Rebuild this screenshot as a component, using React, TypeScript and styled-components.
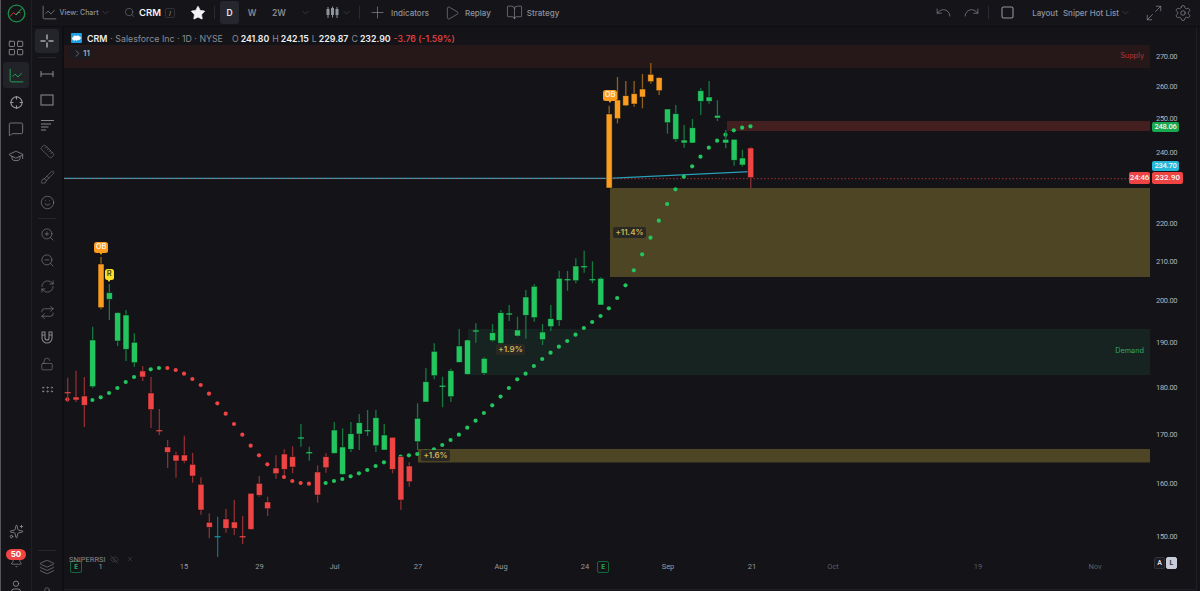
import React from 'react';
import styled, { createGlobalStyle } from 'styled-components';
import {
  LayoutGrid, ChartLine, MessageSquare, GraduationCap, Sparkles, Bell, User,
  Ruler, Brush, Smile, ZoomIn, ZoomOut, RefreshCw, Repeat, LockOpen,
  GripHorizontal, Layers, Play, BookOpen, Undo, Redo, Maximize2, Settings, Search,
  ChevronDown, ChevronRight, X, EyeOff, Plus, Star,
} from 'lucide-react';

const GREEN = '#22c55e';
const RED = '#ef4444';
const ORANGE = '#f99c1f';
const TEAL = '#1596ad';

const wickColors: Record<string, string> = { g: '#157a40', r: '#8f2f32', o: '#93601c', t: '#156b7c' };
const bodyColors: Record<string, string> = { g: GREEN, r: RED, o: ORANGE, t: TEAL };

// color, wick top, body top, body bottom, wick bottom (page px). a doji has top === bottom
const candles: [string, number, number, number, number][] = [
  ['r', 377.7, 392.7, 392.7, 402], ['r', 370.7, 397, 400, 402], ['r', 377, 396, 405.3, 427],
  ['g', 326.7, 340, 386.7, 388], ['o', 257, 264, 307.7, 309.3], ['g', 284, 292.7, 299.3, 320],
  ['g', 312, 312.7, 341, 346], ['g', 310, 315, 349.3, 361], ['g', 333.3, 342.3, 362.7, 366.7],
  ['r', 366, 371, 377, 381], ['r', 377, 393, 409.5, 428], ['r', 409, 430.7, 430.7, 435],
  ['r', 440, 447, 452.3, 468], ['r', 451.7, 455, 461, 477.7], ['r', 435.7, 455, 461, 463.3],
  ['r', 453, 464.3, 476, 482.7], ['r', 477.3, 484.3, 510, 514.7], ['r', 513.3, 522.3, 527.3, 538.3],
  ['t', 516.7, 536.7, 536.7, 557.3], ['r', 509, 519, 528.3, 532.7], ['r', 500, 522, 528.3, 535],
  ['r', 516, 536.7, 536.7, 544], ['r', 493, 493.3, 529.3, 530], ['r', 476, 483.3, 495.3, 496.7],
  ['r', 496.7, 502, 508.7, 516], ['r', 455.3, 468, 473.7, 478.7], ['r', 449.3, 454, 469.3, 474.7],
  ['r', 446.3, 456.7, 467, 473.3], ['g', 424, 438, 438, 446.7], ['g', 446.7, 452.7, 452.7, 460.7],
  ['r', 465.3, 472, 495, 502.7], ['r', 453.3, 456.7, 467.7, 472.7], ['g', 422, 430, 453.3, 454],
  ['g', 428.3, 447, 474.3, 475], ['g', 422, 433.7, 449.3, 452], ['g', 414, 422.7, 434, 450],
  ['g', 410, 430.7, 430.7, 436], ['g', 410, 417.7, 445.7, 452], ['g', 424, 435, 450, 450],
  ['r', 437, 437.3, 469.3, 473.3], ['r', 456, 456.7, 500, 510], ['r', 462.3, 466, 481.7, 486.7],
  ['g', 403.3, 418.3, 441.7, 450], ['g', 368, 381.7, 402, 402], ['g', 343.3, 351.3, 375.7, 379.3],
  ['g', 376.7, 386.3, 386.3, 407.3], ['g', 368.7, 370.7, 396.7, 402], ['g', 329, 346, 362.3, 362.7],
  ['g', 339.3, 340, 374.3, 375], ['g', 323.3, 331, 331, 342.7], ['g', 357.3, 358.3, 373.3, 375],
  ['g', 324, 332.7, 340.7, 341.7], ['g', 310, 312.7, 343.3, 344], ['g', 305, 314, 314, 321],
  ['g', 316.7, 330, 336, 336.7], ['g', 290, 297, 315.3, 338.7], ['g', 284.3, 286.3, 317.7, 321.7],
  ['g', 324, 332, 339.7, 345], ['g', 305, 318.7, 326.7, 331], ['g', 270.7, 278.3, 320.3, 326],
  ['g', 271, 279.7, 279.7, 290.7], ['g', 258.3, 266, 280.7, 283.3], ['g', 250.7, 266.7, 266.7, 272.7],
  ['g', 261.3, 279.7, 279.7, 283.3], ['g', 277.3, 278.3, 305, 305], ['o', 105.7, 114, 188, 188],
  ['o', 77, 100, 118.7, 123.3], ['o', 81, 95.7, 105.7, 106.3], ['o', 81, 93.7, 104, 106.7],
  ['o', 74, 89, 97, 108.3], ['o', 63, 74.3, 81.7, 83.7], ['o', 77, 77.7, 90.7, 95],
  ['g', 109, 109, 122.7, 133.7], ['g', 105, 113.7, 139.3, 141.7], ['g', 125, 140, 143, 147.7],
  ['g', 119, 127.7, 143, 143.3], ['g', 88.3, 90.7, 101.3, 115], ['g', 81, 97, 101.3, 103.7],
  ['g', 100.3, 115.3, 118, 121], ['g', 130, 139.3, 143, 148.3], ['g', 139, 139.3, 160.3, 165.7],
  ['g', 149.7, 158, 165, 166.7], ['r', 146.7, 148, 177.7, 188],
];

const dots = [
  399.3, 398.5, 400, 400, 397.3, 393, 388, 382, 377, 372.5, 369.3, 368, 368, 370, 373.7, 379, 385, 393.7,
  403.3, 413.7, 424, 434.7, 445.7, 455.3, 464.3, 471, 477, 481, 483, 483.7, 484, 483, 481, 479, 476.3,
  473.3, 470, 466, 462.3, 459, 456.7, 455.3, 454, 451.7, 449.3, 445, 440, 434.7, 427.7, 420.7, 413, 405.3,
  396.6, 388, 379.3, 373.7, 366, 359, 352.7, 346.7, 341, 334.7, 328, 322, 316, 308.3, 298, 285.3, 270.3,
  254.3, 237.7, 220.7, 204, 189.3, 176.7, 166.3, 156.7, 147.7, 140.7, 134.7, 130.3, 127.7, 126.3,
];

const dotColor = (i: number) => (i < 3 || (i >= 12 && i <= 30) ? RED : GREEN);
const barX = (i: number) => 67.7 + i * 8.33;

const priceLabels = [
  { y: 56.5, t: '270.00' }, { y: 87, t: '260.00' }, { y: 119, t: '250.00' }, { y: 153, t: '240.00' },
  { y: 224, t: '220.00' }, { y: 262, t: '210.00' }, { y: 301, t: '200.00' }, { y: 343, t: '190.00' },
  { y: 388, t: '180.00' }, { y: 435, t: '170.00' }, { y: 484, t: '160.00' }, { y: 537, t: '150.00' },
];

const timeLabels = [
  { x: 100.5, t: '1' }, { x: 184, t: '15' }, { x: 259.5, t: '29' }, { x: 334.5, t: 'Jul' }, { x: 418, t: '27' },
  { x: 501, t: 'Aug' }, { x: 585, t: '24' }, { x: 668, t: 'Sep' }, { x: 752, t: '21' },
  { x: 833, t: 'Oct', dim: true }, { x: 978, t: '19', dim: true }, { x: 1095, t: 'Nov', dim: true },
];

const GlobalStyle = createGlobalStyle`
  html, body { margin: 0; padding: 0; background: #131318; }
  body { font-family: Inter, "Noto Sans", sans-serif; overflow: hidden; }
  #root { height: 591px; }
  svg { flex-shrink: 0; }
`;

const Shell = styled.div`
  display: flex;
  width: 1200px;
  height: 591px;
  overflow: hidden;
  background: #131318;
  border-left: 1px solid #55555a;
  box-sizing: border-box;
`;

const Rail = styled.aside`
  width: 30px;
  flex-shrink: 0;
  display: flex;
  flex-direction: column;
  align-items: center;
  background: #141419;
  border-right: 1px solid #1f1f25;
  color: #96969c;
`;

const LogoSlot = styled.div`
  height: 26px;
  margin-bottom: 9px;
  display: flex;
  align-items: center;
  flex-shrink: 0;
`;

const RailButton = styled.div<{ $active?: boolean }>`
  width: 26px;
  height: 26px;
  margin-bottom: 1px;
  flex-shrink: 0;
  display: flex;
  align-items: center;
  justify-content: center;
  border-radius: 3px;
  background: ${(p) => (p.$active ? '#212329' : 'transparent')};
  color: ${(p) => (p.$active ? GREEN : 'inherit')};
`;

const RailBottom = styled.div`
  margin-top: 348px;
  display: flex;
  flex-direction: column;
  align-items: center;
`;

const AlertWrap = styled.div`
  height: 25px;
  margin-top: 4px;
  display: flex;
  flex-direction: column;
  align-items: center;
  flex-shrink: 0;
  svg {
    margin-top: -5px;
  }
`;

const AlertBadge = styled.div`
  position: relative;
  z-index: 1;
  width: 20px;
  height: 11px;
  border-radius: 6px;
  background: ${RED};
  color: #fff;
  font-size: 8px;
  font-weight: 700;
  line-height: 11px;
  text-align: center;
`;

const Main = styled.div`
  flex: 1;
  min-width: 0;
  display: flex;
  flex-direction: column;
`;

const TopBar = styled.header`
  height: 27px;
  flex-shrink: 0;
  display: flex;
  align-items: center;
  background: #141419;
  border-bottom: 1px solid #0e0e12;
  color: #8f939c;
  font-size: 8px;
  font-weight: 500;
  padding-right: 8.5px;
  padding-bottom: 1px;
  box-sizing: border-box;
`;

const TopItem = styled.div<{ $ml?: number; $gap?: number }>`
  display: flex;
  align-items: center;
  flex-shrink: 0;
  margin-left: ${(p) => p.$ml ?? 0}px;
  gap: ${(p) => p.$gap ?? 0}px;
  white-space: nowrap;
`;

const ViewLabel = styled.span`
  font-size: 7px;
`;

const Chevron = styled(TopItem)`
  color: #5f6168;
`;

const TopDivider = styled.div<{ $ml: number }>`
  width: 1px;
  height: 13px;
  flex-shrink: 0;
  margin-left: ${(p) => p.$ml}px;
  background: #2a2a30;
`;

const Symbol = styled.span`
  color: #f2f2f4;
  font-size: 9.5px;
  font-weight: 600;
`;

const SlashChip = styled.span`
  width: 8px;
  height: 8px;
  border: 1px solid #303036;
  border-radius: 2px;
  font-size: 6px;
  line-height: 8px;
  text-align: center;
  color: #9a9aa0;
`;

const Interval = styled.div<{ $ml: number; $w: number; $active?: boolean }>`
  margin-left: ${(p) => p.$ml}px;
  width: ${(p) => p.$w}px;
  height: 23px;
  flex-shrink: 0;
  display: flex;
  align-items: center;
  justify-content: center;
  border-radius: 3px;
  font-size: 8.5px;
  font-weight: 600;
  background: ${(p) => (p.$active ? '#26262e' : 'transparent')};
  color: ${(p) => (p.$active ? '#e8e8ec' : '#85888f')};
`;

const RightGroup = styled.div`
  margin-left: auto;
  display: flex;
  align-items: center;
`;

const LayoutName = styled.span`
  margin-left: 5px;
  font-size: 8px;
  color: #8d95a8;
`;

const LayoutLabel = styled.span`
  font-size: 8px;
  color: #8d95a8;
`;

const Body = styled.div`
  flex: 1;
  min-height: 0;
  display: flex;
`;

const DrawBar = styled.nav`
  width: 30px;
  flex-shrink: 0;
  display: flex;
  flex-direction: column;
  align-items: center;
  padding-top: 2px;
  background: #141419;
  border-right: 2px solid #0f0f13;
  color: #85858b;
`;

const ActiveTool = styled.div`
  width: 24px;
  height: 24px;
  flex-shrink: 0;
  border-radius: 3px;
  background: #24242b;
  color: #e6e6ea;
  display: flex;
  align-items: center;
  justify-content: center;
`;

const ToolDivider = styled.div<{ $mt: number }>`
  width: 18px;
  height: 1px;
  flex-shrink: 0;
  margin: ${(p) => p.$mt}px 0 3px;
  background: #26262c;
`;

const Tool = styled.div`
  height: 25.8px;
  flex-shrink: 0;
  display: flex;
  align-items: center;
  justify-content: center;
`;

const ChartColumn = styled.div`
  flex: 1;
  min-width: 0;
  display: flex;
  flex-direction: column;
`;

const ChartRow = styled.div`
  height: 530px;
  flex-shrink: 0;
  display: flex;
`;

const Pane = styled.main`
  position: relative;
  width: 1086px;
  flex-shrink: 0;
`;

const ChartSvg = styled.svg`
  display: block;
`;

const Legend = styled.div`
  position: absolute;
  left: 7px;
  top: 5px;
  display: flex;
  align-items: center;
  height: 12px;
  font-size: 8.8px;
  color: #8c8c92;
  white-space: nowrap;
`;

const LegendSymbol = styled.span`
  margin: 0 3px 0 5px;
  color: #eeeef0;
  font-weight: 600;
`;

const Ohlc = styled.span<{ $ml?: number }>`
  margin-left: ${(p) => p.$ml ?? 3}px;
`;

const OhlcValue = styled.b`
  color: #eeeef0;
  font-weight: 600;
  margin-left: 2px;
`;

const Change = styled.span`
  margin-left: 3px;
  color: ${RED};
  font-weight: 500;
`;

const CollapseChip = styled.div`
  position: absolute;
  left: 6px;
  top: 20px;
  width: 22px;
  height: 12px;
  display: flex;
  align-items: center;
  justify-content: center;
  border-radius: 2px;
  background: #1a1a1f;
  color: #a8a8ae;
  font-size: 8px;
  font-weight: 600;
`;

const ZoneLabel = styled.span<{ $color: string; $right: number; $top: number }>`
  position: absolute;
  right: ${(p) => p.$right}px;
  top: ${(p) => p.$top}px;
  font-size: 7.3px;
  line-height: 10px;
  color: ${(p) => p.$color};
`;

const PercentTag = styled.span<{ $left: number; $top: number; $w: number }>`
  position: absolute;
  left: ${(p) => p.$left}px;
  top: ${(p) => p.$top}px;
  width: ${(p) => p.$w}px;
  height: 11px;
  border-radius: 2px;
  background: #2a2822;
  color: #cdb656;
  font-size: 8px;
  font-weight: 600;
  line-height: 11px;
  text-align: center;
`;

const Marker = styled.span<{ $left: number; $top: number; $w: number; $bg: string; $fg: string }>`
  position: absolute;
  left: ${(p) => p.$left}px;
  top: ${(p) => p.$top}px;
  width: ${(p) => p.$w}px;
  height: 10.5px;
  border-radius: 2.5px;
  background: ${(p) => p.$bg};
  color: ${(p) => p.$fg};
  font-size: 7.5px;
  font-weight: 600;
  line-height: 10.5px;
  text-align: center;
  &::after {
    content: '';
    position: absolute;
    left: 50%;
    bottom: -2.5px;
    margin-left: -2.5px;
    border-left: 2.5px solid transparent;
    border-right: 2.5px solid transparent;
    border-top: 3px solid ${(p) => p.$bg};
  }
`;

const PaneName = styled.div`
  position: absolute;
  left: 5px;
  top: 528px;
  z-index: 1;
  display: flex;
  align-items: center;
  height: 8px;
  font-family: Roboto, sans-serif;
  font-size: 7.5px;
  color: #8a8a90;
`;

const PaneAction = styled.span<{ $ml: number }>`
  margin-left: ${(p) => p.$ml}px;
  display: flex;
  color: #66666c;
`;

const PriceAxis = styled.div`
  position: relative;
  width: 46px;
  flex-shrink: 0;
  border-right: 1px solid #1e1e24;
  font-family: Roboto, sans-serif;
`;

const PriceLabel = styled.span`
  position: absolute;
  left: 6px;
  font-size: 7.5px;
  letter-spacing: -0.3px;
  line-height: 10px;
  transform: translateY(-50%);
  color: #b4b4b9;
`;

const PriceTag = styled.span<{ $bg: string; $left: number; $top: number; $w: number; $h: number; $fg?: string }>`
  position: absolute;
  left: ${(p) => p.$left}px;
  top: ${(p) => p.$top}px;
  width: ${(p) => p.$w}px;
  height: ${(p) => p.$h}px;
  border-radius: 2px;
  background: ${(p) => p.$bg};
  color: ${(p) => p.$fg ?? '#f4f4f6'};
  font-size: 7.5px;
  letter-spacing: -0.2px;
  font-weight: 500;
  line-height: ${(p) => p.$h}px;
  text-align: center;
`;

const LivePriceTag = styled(PriceTag)`
  font-size: 8px;
  letter-spacing: 0;
`;

const CountdownTag = styled(PriceTag)`
  z-index: 2;
  font-size: 8px;
`;

const TimeAxis = styled.div`
  position: relative;
  height: 33px;
  flex-shrink: 0;
  border-bottom: 1px solid #1e1e24;
  border-right: 1px solid #1e1e24;
  box-sizing: border-box;
  width: 1133px;
  font-family: Roboto, sans-serif;
`;

const TimeLabel = styled.span<{ $dim?: boolean }>`
  position: absolute;
  top: 6px;
  font-size: 7.5px;
  line-height: 7px;
  transform: translateX(-50%);
  color: ${(p) => (p.$dim ? '#5e5e64' : '#9a9aa0')};
`;

const EventBadge = styled.span<{ $left: number }>`
  position: absolute;
  left: ${(p) => p.$left}px;
  top: 4px;
  width: 10px;
  height: 10px;
  border: 1px solid #17653a;
  border-radius: 2px;
  color: #26a85c;
  font-size: 6.5px;
  font-weight: 700;
  line-height: 10px;
  text-align: center;
`;

const ScaleButton = styled.span<{ $left: number; $on?: boolean }>`
  position: absolute;
  left: ${(p) => p.$left}px;
  top: 0;
  width: 9px;
  height: 10px;
  border-radius: 2px;
  border: 1px solid ${(p) => (p.$on ? '#c8ccd8' : '#33333a')};
  background: ${(p) => (p.$on ? '#c8ccd8' : '#1c1c22')};
  color: ${(p) => (p.$on ? '#33333a' : '#d8d8de')};
  font-size: 7px;
  font-weight: 700;
  line-height: 10px;
  text-align: center;
`;

const LogoIcon = () => (
  <svg width="19" height="19" viewBox="0 0 19 19" fill="none">
    <circle cx="9.5" cy="9.5" r="8.3" stroke="#1a8f49" strokeWidth="1.3" />
    <path d="M3 12.5 6.5 8.5 9 11l2.5-3 2 1" stroke="#c7383c" strokeWidth="1" />
    <path d="M9 11l3-3.5 3-3" stroke="#2cc267" strokeWidth="1" />
  </svg>
);

const TargetIcon = () => (
  <svg width="15" height="15" viewBox="0 0 15 15" fill="none" stroke="currentColor" strokeWidth="1.1">
    <circle cx="7.5" cy="7.5" r="5.6" />
    <path d="M7.5 1v3.4M7.5 10.6V14M1 7.5h3.4M10.6 7.5H14" />
  </svg>
);

const CrossIcon = () => (
  <svg width="14" height="14" viewBox="0 0 14 14" fill="none" stroke="currentColor" strokeWidth="1">
    <path d="M7 0.5v5M7 8.500v5M0.500 7h5M8.500 7h5" />
  </svg>
);

const MeasureIcon = () => (
  <svg width="14" height="10" viewBox="0 0 14 10" fill="none" stroke="currentColor" strokeWidth="1.1">
    <path d="M1 2v6M13 2v6M1 5h12" />
  </svg>
);

const LinesIcon = () => (
  <svg width="13" height="12" viewBox="0 0 13 12" fill="none" stroke="currentColor" strokeWidth="1">
    <path d="M0 1.500h13M0 5h10M0 8h7.500M0 11h5" />
  </svg>
);

const MagnetIcon = () => (
  <svg width="12" height="13" viewBox="0 0 12 13" fill="none" stroke="currentColor" strokeWidth="1.1">
    <path d="M1 1h3v6a2 2 0 0 0 4 0V1h3v6a5 5 0 0 1-10 0zM1 4h3M8 4h3" />
  </svg>
);

const CandlesIcon = () => (
  <svg width="13" height="13" viewBox="0 0 13 13" fill="#8f939c" stroke="#8f939c" strokeWidth="1">
    <path d="M2 1v11M6.500 0.500v11M11 1v11" />
    <rect x="1" y="3.500" width="2" height="5" />
    <rect x="5.500" y="2.500" width="2" height="6" />
    <rect x="10" y="3.500" width="2" height="5" />
  </svg>
);

const CloudIcon = () => (
  <svg width="11" height="10" viewBox="0 0 11 10">
    <rect width="11" height="10" rx="1" fill="#1f9fe2" />
    <path d="M2 6.800a1.500 1.500 0 0 1 .3-2.900 1.900 1.900 0 0 1 3.200-.9 1.700 1.700 0 0 1 2.800.5 1.500 1.500 0 0 1 .6 2.900 1.400 1.400 0 0 1-2 .4 1.600 1.600 0 0 1-2.500.2 1.500 1.500 0 0 1-2.400-.2z" fill="#fff" />
  </svg>
);

const Chart = () => (
  <ChartSvg width="1086" height="530" viewBox="64 27 1086 530">
    <rect x="64" y="45" width="1086" height="23" fill="#261718" />
    <rect x="727" y="121" width="423" height="10" fill="#43201f" />
    <rect x="610" y="188" width="540" height="89" fill="#4d4524" />
    <rect x="468" y="329" width="682" height="46" fill="#172321" />
    <rect x="418" y="449" width="732" height="13.500" fill="#4d4524" />
    <path d="M64 178.300H608L750 171.700" fill="none" stroke="#2a9fb8" strokeWidth="1.300" />
    <path d="M64 178.700H1130" fill="none" stroke={RED} strokeOpacity="0.8" strokeWidth="0.800" strokeDasharray="1.500 2" />
    {dots.map((y, i) => (
      <circle key={i} cx={barX(i) - 0.3} cy={y} r="2.100" fill={dotColor(i)} />
    ))}
    {candles.map(([c, wt, bt, bb, wb], i) => {
      const x = barX(i);
      const doji = bt === bb;
      return (
        <g key={i}>
          <path d={`M${x} ${wt}V${wb}`} stroke={wickColors[c]} strokeWidth="1.300" />
          {doji ? (
            <rect x={x - 3} y={bt - 0.7} width="6" height="1.400" fill={bodyColors[c]} opacity="0.85" />
          ) : (
            <rect x={x - 3} y={bt} width="6" height={bb - bt} fill={bodyColors[c]} stroke="#0e0e12" strokeOpacity="0.7" strokeWidth="0.700" />
          )}
        </g>
      );
    })}
  </ChartSvg>
);

export default function App() {
  return (
    <>
      <GlobalStyle />
      <Shell>
        <Rail>
          <LogoSlot><LogoIcon /></LogoSlot>
          <RailButton><LayoutGrid size={18} strokeWidth={1.1} /></RailButton>
          <RailButton $active><ChartLine size={17} strokeWidth={1.1} /></RailButton>
          <RailButton><TargetIcon /></RailButton>
          <RailButton><MessageSquare size={16} strokeWidth={1.1} /></RailButton>
          <RailButton><GraduationCap size={16} strokeWidth={1.1} /></RailButton>
          <RailBottom>
            <RailButton><Sparkles size={15} strokeWidth={1.2} /></RailButton>
            <AlertWrap>
              <AlertBadge>50</AlertBadge>
              <Bell size={13} strokeWidth={1.2} />
            </AlertWrap>
            <RailButton><User size={16} strokeWidth={1.2} /></RailButton>
          </RailBottom>
        </Rail>
        <Main>
          <TopBar>
            <TopItem $ml={9} $gap={1.5}>
              <ChartLine size={17} strokeWidth={1} />
              <ViewLabel>View: Chart</ViewLabel>
              <ChevronDown size={11} strokeWidth={1} color="#5f6168" />
            </TopItem>
            <TopItem $ml={13} $gap={4}>
              <Search size={11} strokeWidth={1} />
              <Symbol>CRM</Symbol>
              <SlashChip>/</SlashChip>
            </TopItem>
            <TopItem $ml={15}>
              <Star size={16} fill="#f4f4f6" color="#f4f4f6" strokeWidth={1} />
            </TopItem>
            <TopDivider $ml={8} />
            <Interval $ml={5} $w={19} $active>D</Interval>
            <Interval $ml={3.500} $w={19}>W</Interval>
            <Interval $ml={7} $w={21}>2W</Interval>
            <Chevron $ml={10}><ChevronDown size={11} strokeWidth={1} /></Chevron>
            <TopItem $ml={15.500}><CandlesIcon /></TopItem>
            <Chevron $ml={1.500}><ChevronDown size={11} strokeWidth={1} /></Chevron>
            <TopDivider $ml={7.500} />
            <TopItem $ml={8} $gap={4}>
              <Plus size={19} strokeWidth={0.8} />
              <span>Indicators</span>
            </TopItem>
            <TopItem $ml={15} $gap={5}>
              <Play size={16} strokeWidth={0.9} />
              <span>Replay</span>
            </TopItem>
            <TopItem $ml={15.600} $gap={3.400}>
              <BookOpen size={17} strokeWidth={0.9} />
              <span>Strategy</span>
            </TopItem>
            <RightGroup>
              <Undo size={17} strokeWidth={0.9} />
              <TopItem $ml={11}><Redo size={17} strokeWidth={0.9} /></TopItem>
              <TopDivider $ml={8} />
              <TopItem $ml={12}>
                <svg width="13" height="13" viewBox="0 0 13 13" fill="none" stroke="currentColor" strokeWidth="1.100">
                  <rect x="1" y="1" width="11" height="11" rx="1.500" />
                </svg>
              </TopItem>
              <TopItem $ml={18}>
                <LayoutLabel>Layout</LayoutLabel>
                <LayoutName>Sniper Hot List</LayoutName>
              </TopItem>
              <Chevron $ml={0.500}><ChevronDown size={11} strokeWidth={1} /></Chevron>
              <TopItem $ml={14}><Maximize2 size={18} strokeWidth={0.9} /></TopItem>
              <TopItem $ml={11}><Settings size={18} strokeWidth={0.9} /></TopItem>
            </RightGroup>
          </TopBar>
          <Body>
            <DrawBar>
              <ActiveTool><CrossIcon /></ActiveTool>
              <ToolDivider $mt={4} />
              <Tool><MeasureIcon /></Tool>
              <Tool>
                <svg width="14" height="12" viewBox="0 0 14 12" fill="none" stroke="currentColor" strokeWidth="1.100">
                  <rect x="1" y="1" width="12" height="10" />
                </svg>
              </Tool>
              <Tool><LinesIcon /></Tool>
              <Tool><Ruler size={15} strokeWidth={0.9} /></Tool>
              <Tool><Brush size={15} strokeWidth={0.9} /></Tool>
              <Tool><Smile size={15} strokeWidth={1} /></Tool>
              <ToolDivider $mt={2} />
              <Tool><ZoomIn size={15} strokeWidth={1} /></Tool>
              <Tool><ZoomOut size={15} strokeWidth={1} /></Tool>
              <Tool><RefreshCw size={15} strokeWidth={1} /></Tool>
              <Tool><Repeat size={15} strokeWidth={1} /></Tool>
              <Tool><MagnetIcon /></Tool>
              <Tool><LockOpen size={14} strokeWidth={1} /></Tool>
              <Tool><GripHorizontal size={15} strokeWidth={1.4} /></Tool>
              <ToolDivider $mt={148} />
              <Tool><Layers size={16} strokeWidth={1} /></Tool>
              <Tool><User size={14} strokeWidth={1} /></Tool>
            </DrawBar>
            <ChartColumn>
              <ChartRow>
                <Pane>
                  <Chart />
                  <Legend>
                    <CloudIcon />
                    <LegendSymbol>CRM</LegendSymbol>
                    <span>· Salesforce Inc · 1D · NYSE</span>
                    <Ohlc $ml={9}>O<OhlcValue>241.80</OhlcValue></Ohlc>
                    <Ohlc>H<OhlcValue>242.15</OhlcValue></Ohlc>
                    <Ohlc>L<OhlcValue>229.87</OhlcValue></Ohlc>
                    <Ohlc>C<OhlcValue>232.90</OhlcValue></Ohlc>
                    <Change>-3.76 (-1.59%)</Change>
                  </Legend>
                  <CollapseChip><ChevronRight size={11} strokeWidth={1.2} />11</CollapseChip>
                  <ZoneLabel $color="#b83a3a" $right={6} $top={24}>Supply</ZoneLabel>
                  <ZoneLabel $color="#35a868" $right={6} $top={319}>Demand</ZoneLabel>
                  <PercentTag $left={549} $top={200} $w={33}>+11.4%</PercentTag>
                  <PercentTag $left={432} $top={317} $w={29}>+1.9%</PercentTag>
                  <PercentTag $left={357} $top={423} $w={29}>+1.6%</PercentTag>
                  <Marker $left={30} $top={215} $w={14} $bg={ORANGE} $fg="#fff0d8">OB</Marker>
                  <Marker $left={539} $top={63} $w={14} $bg={ORANGE} $fg="#fff0d8">OB</Marker>
                  <Marker $left={40.500} $top={242} $w={9.500} $bg="#fde024" $fg="#4a4210">R</Marker>
                  <PaneName>
                    SNIPERRSI
                    <PaneAction $ml={4}><EyeOff size={9} strokeWidth={1} /></PaneAction>
                    <PaneAction $ml={7}><X size={8} strokeWidth={1} /></PaneAction>
                  </PaneName>
                </Pane>
                <PriceAxis>
                  {priceLabels.map((l) => (
                    <PriceLabel key={l.t} style={{ top: l.y - 27 }}>{l.t}</PriceLabel>
                  ))}
                  <PriceTag $bg="#17a850" $left={2} $top={94.500} $w={27} $h={10}>248.06</PriceTag>
                  <PriceTag $bg="#25b9d8" $left={2} $top={134} $w={27} $h={10}>234.70</PriceTag>
                  <LivePriceTag $bg={RED} $left={2} $top={145} $w={31} $h={12}>232.90</LivePriceTag>
                  <CountdownTag $bg={RED} $left={-21} $top={145} $w={21} $h={12}>24:46</CountdownTag>
                </PriceAxis>
              </ChartRow>
              <TimeAxis>
                {timeLabels.map((l) => (
                  <TimeLabel key={l.t} $dim={l.dim} style={{ left: l.x - 64 }}>{l.t}</TimeLabel>
                ))}
                <EventBadge $left={6}>E</EventBadge>
                <EventBadge $left={533}>E</EventBadge>
                <ScaleButton $left={1090}>A</ScaleButton>
                <ScaleButton $left={1102} $on>L</ScaleButton>
              </TimeAxis>
            </ChartColumn>
          </Body>
        </Main>
      </Shell>
    </>
  );
}
